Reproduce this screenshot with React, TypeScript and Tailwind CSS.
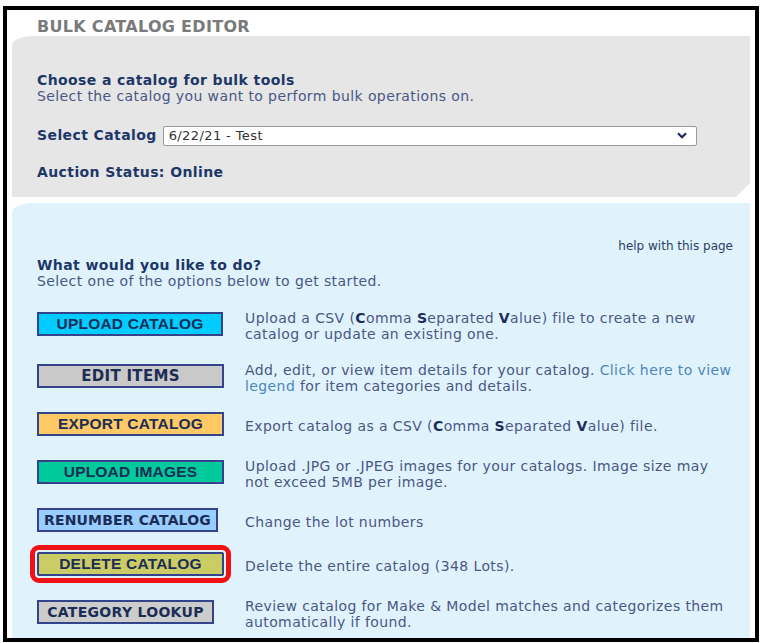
import React from 'react';

const verdana = { fontFamily: '"DejaVu Sans", Verdana, sans-serif' };
const arial = { fontFamily: '"Liberation Sans", Arial, sans-serif' };

type Action = {
  label: string;
  bg: string;
  width: string;
  font: string;
  arial: boolean;
  outlined?: boolean;
  text: React.ReactNode;
};

const B = ({ children }: { children: React.ReactNode }) => (
  <b className="font-bold text-[#1c2e60]">{children}</b>
);

const csv = (
  <>
    (<B>C</B>omma <B>S</B>eparated <B>V</B>alue)
  </>
);

const actions: Action[] = [
  {
    label: 'UPLOAD CATALOG',
    bg: 'bg-[#00ccff]',
    width: 'w-[186px]',
    font: 'text-[15.5px] tracking-[0.2px]',
    arial: true,
    text: (
      <>
        Upload a CSV {csv} file to create a new
        <br />
        catalog or update an existing one.
      </>
    ),
  },
  {
    label: 'EDIT ITEMS',
    bg: 'bg-[#c9c9c9]',
    width: 'w-[187px]',
    font: 'text-[15px] tracking-[0.3px]',
    arial: false,
    text: (
      <>
        Add, edit, or view item details for your catalog.{' '}
        <span className="text-[#4d87b8]">Click here to view</span>
        <br />
        <span className="text-[#4d87b8]">legend</span> for item categories and details.
      </>
    ),
  },
  {
    label: 'EXPORT CATALOG',
    bg: 'bg-[#ffc966]',
    width: 'w-[187px]',
    font: 'text-[15.5px] tracking-[0.2px]',
    arial: true,
    text: <>Export catalog as a CSV {csv} file.</>,
  },
  {
    label: 'UPLOAD IMAGES',
    bg: 'bg-[#00c99c]',
    width: 'w-[187px]',
    font: 'text-[15.5px] tracking-[0.2px]',
    arial: true,
    text: (
      <>
        Upload .JPG or .JPEG images for your catalogs. Image size may
        <br />
        not exceed 5MB per image.
      </>
    ),
  },
  {
    label: 'RENUMBER CATALOG',
    bg: 'bg-[#99ccff]',
    width: 'w-[181px]',
    font: 'text-[14px] tracking-[0.15px]',
    arial: false,
    text: <>Change the lot numbers</>,
  },
  {
    label: 'DELETE CATALOG',
    bg: 'bg-[#cccc66]',
    width: 'w-[187px]',
    font: 'text-[15.5px] tracking-[0.2px]',
    arial: true,
    outlined: true,
    text: <>Delete the entire catalog (348 Lots).</>,
  },
  {
    label: 'CATEGORY LOOKUP',
    bg: 'bg-[#cccccc]',
    width: 'w-[177px]',
    font: 'text-[14px] tracking-[0.3px]',
    arial: false,
    text: (
      <>
        Review catalog for Make &amp; Model matches and categorizes them
        <br />
        automatically if found.
      </>
    ),
  },
];

function ActionButton({ a }: { a: Action }) {
  return (
    <div
      className={`${a.width} ${a.bg} ${a.font} h-[24px] border-2 border-[#34448a] flex items-center justify-center font-bold text-[#1b2d55] whitespace-nowrap ${
        a.outlined ? 'rounded-[2px] outline-[5px] outline-solid outline-[#f01212] outline-offset-[2px]' : ''
      }`}
      style={a.arial ? arial : verdana}
    >
      {a.label}
    </div>
  );
}

export default function App() {
  return (
    <div className="w-[763px] h-[643px] bg-white pt-[6px] pl-[3px] overflow-hidden" style={verdana}>
      <div className="w-[756px] h-[636px] border-4 border-black flex flex-col pl-[5px] pr-[5px] pt-[8px]">
        <div className="h-[18px] leading-[18px] pl-[25px] text-[16px] tracking-[0.3px] font-bold text-[#7a7a7a]">
          BULK CATALOG EDITOR
        </div>

        {/* catalog chooser */}
        <div className="bg-[#e6e6e6] rounded-tl-[22px_9px] pl-[25px] pt-[36px] pb-[17px] text-[14px] tracking-[0.4px] [clip-path:polygon(0_0,100%_0,100%_calc(100%_-_14px),calc(100%_-_14px)_100%,0_100%)]">
          <div className="leading-[16px] font-bold text-[#1d3768]">Choose a catalog for bulk tools</div>
          <div className="leading-[16px] text-[#4a5784]">
            Select the catalog you want to perform bulk operations on.
          </div>
          <div className="mt-[21px] flex items-center">
            <span className="font-bold text-[#1d3768]">Select Catalog</span>
            <div className="ml-[6px] w-[534px] h-[20px] bg-white border border-[#9a9a9a] rounded-[2px] flex items-center justify-between pl-[5px] pr-[9px]">
              <span className="text-[13px] text-[#333]">6/22/21 - Test</span>
              <svg width="10" height="7" viewBox="0 0 10 7">
                <path d="M1 1.2 L5 5.2 L9 1.2" fill="none" stroke="#1b2a5a" strokeWidth="2.2" />
              </svg>
            </div>
          </div>
          <div className="mt-[18px] leading-[16px] font-bold text-[#1d3768]">Auction Status: Online</div>
        </div>

        {/* actions */}
        <div className="mt-[6px] flex-1 bg-[#e0f3fd] rounded-tl-[22px_9px] pl-[25px] pr-[17px] pt-[36px] overflow-hidden text-[14px] tracking-[0.4px]">
          <div className="text-right text-[12px] tracking-normal leading-[14px] text-[#2e3d63]">help with this page</div>
          <div className="mt-[4px] leading-[16px] font-bold text-[#1d3768]">What would you like to do?</div>
          <div className="leading-[16px] text-[#4a5784]">Select one of the options below to get started.</div>

          <div className="mt-[19px] flex flex-col gap-[20px]">
            {actions.map((a) => (
              <div key={a.label} className="flex items-center">
                <div className="w-[187px] shrink-0 flex">
                  <ActionButton a={a} />
                </div>
                <div className="ml-[21px] leading-[16px] text-[#4a5784] whitespace-nowrap translate-y-[2px]">
                  {a.text}
                </div>
              </div>
            ))}
          </div>
        </div>
      </div>
    </div>
  );
}
